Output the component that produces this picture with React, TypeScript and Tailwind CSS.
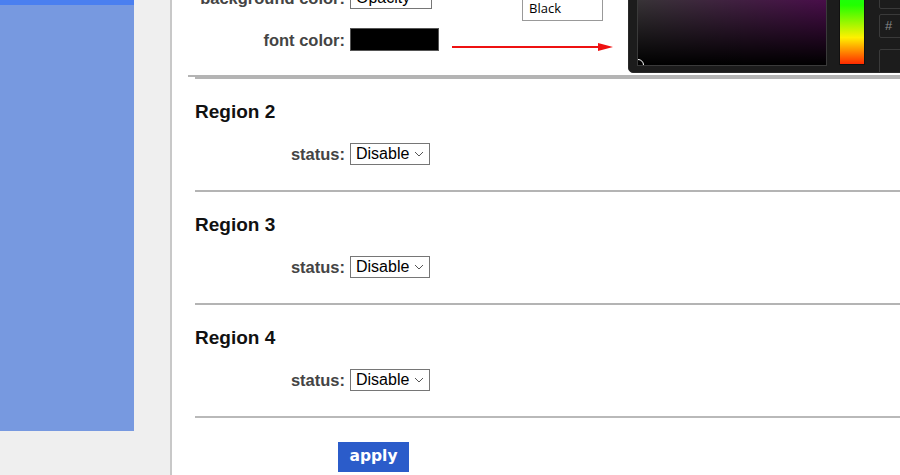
import React from "react";

const Chevron = () => (
  <svg width="10" height="6" viewBox="0 0 10 6" className="shrink-0">
    <path d="M1 1 L5 5 L9 1" fill="none" stroke="#555" strokeWidth="1" />
  </svg>
);

const Select = ({ value, w = "w-[80px]" }: { value: string; w?: string }) => (
  <div className={`${w} h-[22px] border border-[#767676] bg-white flex items-center justify-between pl-[5px] pr-[5px]`}>
    <span className="text-[16px] text-black leading-none">{value}</span>
    <Chevron />
  </div>
);

const Region = ({ n }: { n: number }) => (
  <div className="flex flex-col">
    <div className="h-[2px] bg-[#b4b4b4]" />
    <div className="mt-[22px] h-[22px] leading-[22px] text-[19px] font-bold text-[#111]">Region {n}</div>
    <div className="mt-[20px] flex items-center gap-[5px] h-[22px]">
      <div className="w-[150px] text-right text-[16.5px] leading-[22px] font-bold text-[#444]">status:</div>
      <Select value="Disable" />
    </div>
    <div className="h-[25px]" />
  </div>
);

export default function App() {
  return (
    <div className="w-[900px] h-[475px] overflow-hidden flex bg-white font-['Liberation_Sans',Arial,sans-serif]">
      <div className="w-[172px] shrink-0 bg-[#efefef] border-r-2 border-[#c8c8c8] h-full">
        <div className="w-[134px] h-[431px] bg-[#7799e0] flex flex-col">
          <div className="h-[5px] bg-[#4a7ff0]" />
        </div>
      </div>
      <div className="relative flex-1 h-full">
        <div className="-mt-[13px] flex flex-col">
          <div className="pl-[16px] flex flex-col">
            <div className="flex items-center gap-[5px] h-[22px]">
              <div className="w-[157px] text-right text-[16.5px] leading-[22px] font-bold text-[#444] whitespace-nowrap">background color:</div>
              <Select value="Opacity" w="w-[82px]" />
            </div>
            <div className="mt-[19px] flex items-center gap-[5px] h-[23px]">
              <div className="w-[157px] text-right text-[16.5px] leading-[22px] font-bold text-[#444]">font color:</div>
              <div className="w-[89px] h-[23px] bg-black border border-[#555]" />
            </div>
            <div className="mt-[24px] h-[2px] bg-[#b4b4b4]" />
          </div>
          <div className="pl-[23px] flex flex-col">
            <Region n={2} />
            <Region n={3} />
            <Region n={4} />
            <div className="h-[1.5px] bg-[#b9b9b9]" />
            <div className="mt-[24px] ml-[143px] w-[71px] h-[30px] bg-[#2b5cca] flex items-center justify-center text-white font-bold text-[15.5px] font-['DejaVu_Sans',Verdana,sans-serif]">
              apply
            </div>
          </div>
        </div>

        {/* red arrow */}
        <svg className="absolute left-[280px] top-[41px]" width="162" height="12" viewBox="0 0 162 12">
          <line x1="0" y1="6" x2="148" y2="6" stroke="#ee1111" strokeWidth="2" />
          <polygon points="146,2 161,6 146,10" fill="#ee1111" />
        </svg>

        {/* Black option */}
        <div className="absolute left-[350px] top-[-6px] w-[81px] h-[27px] border border-[#999] bg-white flex items-end pl-[6px] pb-[5px]">
          <span className="text-[13px] leading-none text-black font-['Open_Sans','Noto_Sans',sans-serif]">Black</span>
        </div>

        {/* color picker */}
        <div className="absolute left-[456px] top-[-40px] w-[290px] h-[113px] bg-[#1c1c1c] rounded-bl-[5px] border border-[#2a2a2a] overflow-hidden">
          <div className="absolute left-[8px] top-[4px] w-[190px] h-[101px] border border-[#3a3a3a] bg-[linear-gradient(to_right,#6a6268,#8a1a8c)] overflow-hidden">
            <div className="absolute inset-0 bg-[linear-gradient(to_bottom,rgba(0,0,0,0.2),#000)]" />
            <div className="absolute left-[-6px] bottom-[-6px] w-[12px] h-[12px] rounded-full border border-white" />
          </div>
          <div className="absolute left-[210px] top-[4px] w-[26px] h-[100px] border border-[#111] bg-[linear-gradient(to_bottom,#00ff40_0%,#22ff00_40%,#fff000_73%,#ff9900_85%,#ff2a00_100%)]" />
          <div className="absolute left-[250px] top-[4px] w-[40px] h-[44px] border border-[#3a3a3a] rounded-[2px]" />
          <div className="absolute left-[250px] top-[53px] w-[40px] h-[24px] border border-[#3a3a3a] rounded-[2px] flex items-center pl-[5px]">
            <span className="text-[13px] text-[#8a8a8a]">#</span>
          </div>
          <div className="absolute left-[250px] top-[88px] w-[40px] h-[40px] border border-[#3a3a3a] rounded-[2px]" />
        </div>
      </div>
    </div>
  );
}
